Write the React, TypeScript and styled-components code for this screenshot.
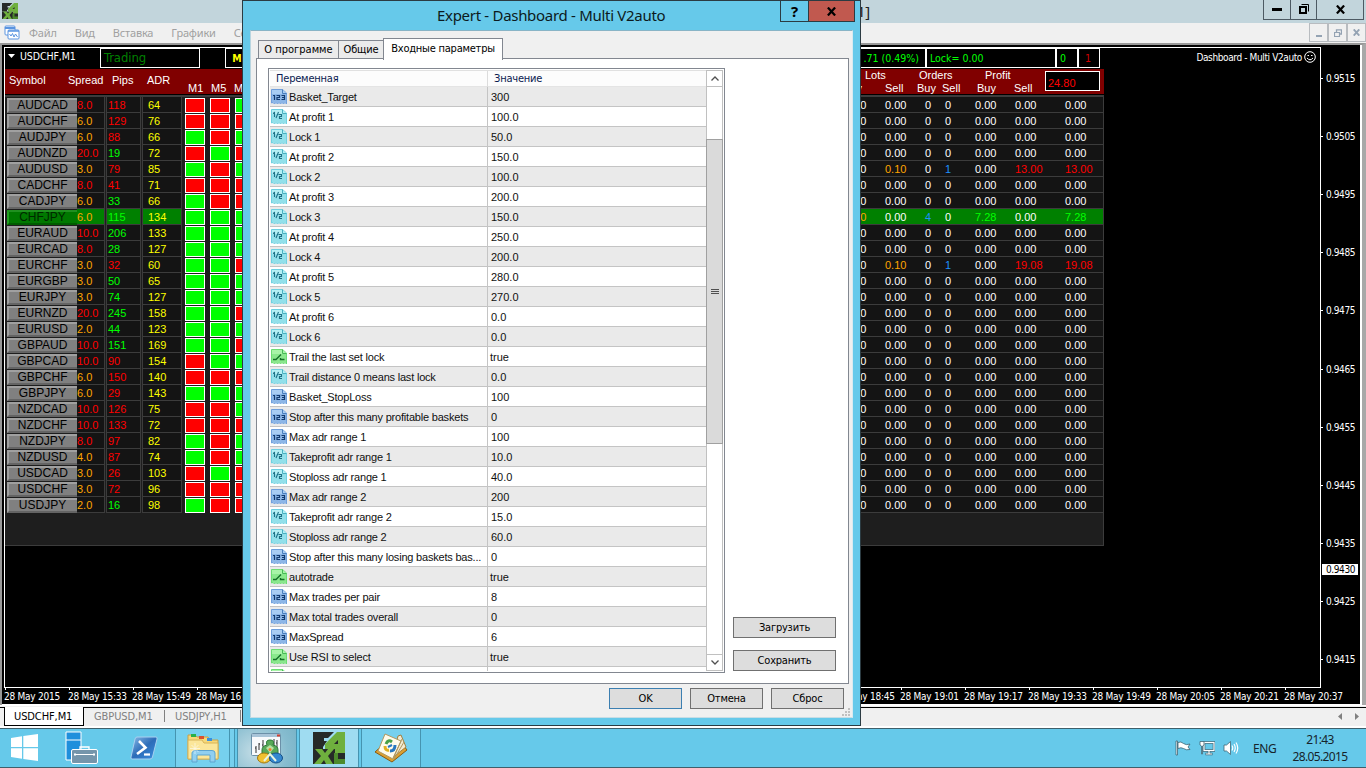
import React from "react";
import styled, { createGlobalStyle, css } from "styled-components";

const ARIAL = `"Liberation Sans", Arial, sans-serif`;
const TAHOMA = `"DejaVu Sans Condensed", Tahoma, sans-serif`;
const SEGOE = `"Noto Sans", "Segoe UI", sans-serif`;

const Global = createGlobalStyle`
  * { box-sizing: border-box; }
  body { margin: 0; overflow: hidden; background: #000; }
  svg { display: block; flex: none; }
`;

/* ---------- data ---------- */

const RED = "#ff0000";
const LIME = "#00ff00";
const ORANGE = "#ffa500";

type Pair = [string, string, string, boolean, string, string];
// name, spread, pips, rising, adr, M1/M5/M15 signals
const pairs: Pair[] = [
  ["AUDCAD", "8.0", "118", false, "64", "rrg"],
  ["AUDCHF", "6.0", "129", false, "76", "rrr"],
  ["AUDJPY", "6.0", "88", false, "66", "grg"],
  ["AUDNZD", "20.0", "19", true, "72", "rgr"],
  ["AUDUSD", "3.0", "79", false, "85", "grg"],
  ["CADCHF", "8.0", "41", false, "71", "rrr"],
  ["CADJPY", "6.0", "33", true, "66", "grr"],
  ["CHFJPY", "6.0", "115", true, "134", "ggg"],
  ["EURAUD", "10.0", "206", true, "133", "ggg"],
  ["EURCAD", "8.0", "28", true, "127", "ggg"],
  ["EURCHF", "3.0", "32", false, "60", "ggr"],
  ["EURGBP", "3.0", "50", true, "65", "ggg"],
  ["EURJPY", "3.0", "74", true, "127", "ggg"],
  ["EURNZD", "20.0", "245", true, "158", "ggr"],
  ["EURUSD", "2.0", "44", true, "123", "ggg"],
  ["GBPAUD", "10.0", "151", true, "169", "ggr"],
  ["GBPCAD", "10.0", "90", false, "154", "rgg"],
  ["GBPCHF", "6.0", "150", false, "140", "rrr"],
  ["GBPJPY", "6.0", "29", false, "143", "ggg"],
  ["NZDCAD", "10.0", "126", false, "75", "rrg"],
  ["NZDCHF", "10.0", "133", false, "72", "rrr"],
  ["NZDJPY", "8.0", "97", false, "82", "grg"],
  ["NZDUSD", "4.0", "87", false, "74", "grg"],
  ["USDCAD", "3.0", "26", false, "103", "rgr"],
  ["USDCHF", "3.0", "72", false, "96", "rrr"],
  ["USDJPY", "2.0", "16", true, "98", "grr"],
];

type Cell = [string, string];
const W = "#ffffff";
const idle: Cell[] = [["0.00", W], ["0.00", W], ["0", W], ["0", W], ["0.00", W], ["0.00", W], ["0.00", W]];
const results: Record<string, Cell[]> = {
  AUDUSD: [["0.00", W], ["0.10", ORANGE], ["0", W], ["1", "#1e90ff"], ["0.00", W], ["13.00", RED], ["13.00", RED]],
  EURCHF: [["0.00", W], ["0.10", ORANGE], ["0", W], ["1", "#1e90ff"], ["0.00", W], ["19.08", RED], ["19.08", RED]],
  CHFJPY: [["0.40", ORANGE], ["0.00", W], ["4", "#1e90ff"], ["0", W], ["7.28", LIME], ["0.00", W], ["7.28", LIME]],
};

type Kind = "int" | "dbl" | "bool";
const params: [Kind, string, string][] = [
  ["int", "Basket_Target", "300"],
  ["dbl", "At profit 1", "100.0"],
  ["dbl", "Lock 1", "50.0"],
  ["dbl", "At profit 2", "150.0"],
  ["dbl", "Lock 2", "100.0"],
  ["dbl", "At profit 3", "200.0"],
  ["dbl", "Lock 3", "150.0"],
  ["dbl", "At profit 4", "250.0"],
  ["dbl", "Lock 4", "200.0"],
  ["dbl", "At profit 5", "280.0"],
  ["dbl", "Lock 5", "270.0"],
  ["dbl", "At profit 6", "0.0"],
  ["dbl", "Lock 6", "0.0"],
  ["bool", "Trail the last set lock", "true"],
  ["dbl", "Trail distance 0 means last lock", "0.0"],
  ["int", "Basket_StopLoss", "100"],
  ["int", "Stop after this many profitable baskets", "0"],
  ["int", "Max adr range 1", "100"],
  ["dbl", "Takeprofit adr range 1", "10.0"],
  ["dbl", "Stoploss adr range 1", "40.0"],
  ["int", "Max adr range 2", "200"],
  ["dbl", "Takeprofit adr range 2", "15.0"],
  ["dbl", "Stoploss adr range 2", "60.0"],
  ["int", "Stop after this many losing baskets bas...", "0"],
  ["bool", "autotrade", "true"],
  ["int", "Max trades per pair", "8"],
  ["int", "Max total trades overall", "0"],
  ["int", "MaxSpread", "6"],
  ["bool", "Use RSI to select", "true"],
  ["bool", "", ""],
];

// empty entries are ticks covered by the dialog
const times = [
  "28 May 2015", "28 May 15:33", "28 May 15:49", "28 May 16:05", "", "", "", "", "", "", "", "", "",
  "28 May 18:45", "28 May 19:01", "28 May 19:17", "28 May 19:33", "28 May 19:49", "28 May 20:05",
  "28 May 20:21", "28 May 20:37",
];
const prices = ["0.9515", "0.9505", "0.9495", "0.9485", "0.9475", "0.9465", "0.9455", "0.9445", "0.9435", "0.9425", "0.9415"];

/* ---------- application frame ---------- */

const Screen = styled.div`
  position: relative;
  width: 1366px;
  height: 768px;
  overflow: hidden;
  display: flex;
  flex-direction: column;
  font: 11px ${ARIAL};
  white-space: nowrap;
`;
const TitleBar = styled.div`
  height: 23px;
  background: #c2d5dc;
  display: flex;
  justify-content: space-between;
  align-items: flex-start;
  padding: 0 2px 0 2px;
`;
const AppIcon = styled.div`
  padding-top: 3px;
  width: 60px;
`;
const AppTitle = styled.div`
  width: 808px;
  text-align: right;
  font: 15px/23px ${SEGOE};
  letter-spacing: -0.3px;
  color: #222;
`;
const WindowButtons = styled.div`
  display: flex;
  margin-left: auto;
  height: 20px;
  border: 1px solid #4d5a63;
  border-top: 0;
`;
const WindowButton = styled.div<{ $w: number }>`
  width: ${(p) => p.$w}px;
  display: flex;
  align-items: center;
  justify-content: center;
  padding-bottom: 1px;
  & + & { border-left: 1px solid #4d5a63; }
`;
const MenuBar = styled.div`
  height: 20px;
  background: #f0f0f0;
  display: flex;
  align-items: center;
  padding-left: 4px;
`;
const MenuItems = styled.div`
  display: flex;
  gap: 18px;
  padding: 0 0 2px 9px;
  font: 11px ${SEGOE};
  letter-spacing: -0.18px;
  color: #a0a0a0;
`;
const MdiButtons = styled.div`
  display: flex;
  margin-left: auto;
  height: 20px;
`;
const MdiButton = styled.div`
  width: 19px;
  height: 19px;
  border: 1px solid #b8bcc0;
  display: flex;
  align-items: center;
  justify-content: center;
`;

/* ---------- chart ---------- */

const ChartFrame = styled.div`
  height: 662px;
  background: #000;
  border-style: solid;
  border-width: 2px 4px 0 2px;
  border-color: #989898 #a8a8a8 #fff #989898;
  display: flex;
`;
const ChartInner = styled.div`
  flex: 1;
  border-right: 2px solid #fff;
  border-bottom: 1px solid #fff;
  padding: 2px 0 0 2px;
  display: flex;
  flex-direction: column;
`;
const ChartMain = styled.div`
  height: 641px;
  display: flex;
`;
const Plot = styled.div`
  width: 1317px;
  border: 1px solid #fff;
  display: flex;
  flex-direction: column;
  align-items: flex-start;
`;
const PriceAxis = styled.div`
  position: relative;
  flex: 1;
  display: flex;
  flex-direction: column;
  padding-top: 2px;
  margin-bottom: -1px;
  font: 10px ${TAHOMA};
  letter-spacing: -0.4px;
`;
const PriceLabel = styled.div`
  flex: 1;
  display: flex;
  align-items: center;
  gap: 3px;
  color: #fff;
  &::before { content: ""; width: 2px; height: 1px; background: #fff; }
`;
const CurrentPrice = styled.div`
  position: absolute;
  left: 1px;
  top: 517px;
  width: 36px;
  height: 11px;
  background: #fff;
  color: #000;
  padding-left: 4px;
  line-height: 11px;
`;
const TimeAxis = styled.div`
  display: flex;
  color: #fff;
  font: 10px/14px ${TAHOMA};
  letter-spacing: -0.25px;
`;
const TimeLabel = styled.div`
  width: 64px;
  flex: none;
  &::before { content: ""; display: block; width: 1px; height: 2px; margin-left: 1px; background: #fff; }
`;

const StatusRow = styled.div`
  width: 1315px;
  height: 21px;
  display: flex;
  color: #fff;
  font: 10.5px ${TAHOMA};
`;
const ChartName = styled.div`
  display: flex;
  align-items: center;
  gap: 5px;
  width: 95px;
  padding-left: 3px;
  padding-bottom: 5px;
  letter-spacing: -0.1px;
`;
const InfoBox = styled.div<{ $w: number; $color: string; $end?: boolean }>`
  width: ${(p) => p.$w}px;
  height: 20px;
  border: 1px solid #fff;
  color: ${(p) => p.$color};
  line-height: 18px;
  padding: 0 ${(p) => (p.$end ? 6 : 3)}px;
  text-align: ${(p) => (p.$end ? "right" : "left")};
  letter-spacing: 0;
`;
const TradingBox = styled(InfoBox)`
  font-size: 13px;
  letter-spacing: -0.1px;
  margin-right: 25px;
`;
const ExpertName = styled.div`
  display: flex;
  align-items: center;
  gap: 2px;
  margin-left: auto;
  padding: 0 4px 3px 0;
  font-size: 10px;
  letter-spacing: -0.38px;
`;

const Dashboard = styled.div`
  width: 1099px;
  background: #1e1e1e;
`;
const HeadRow = styled.div`
  height: 25px;
  background: #800000;
  color: #fff;
  display: flex;
  justify-content: space-between;
`;
const HeadLeft = styled.div`
  display: grid;
  grid-template-columns: 59px 44px 35px 41px 23px 23px 23px;
  padding-left: 4px;
`;
const HeadCell = styled.span<{ $low?: boolean }>`
  line-height: 13px;
  padding-top: ${(p) => (p.$low ? 13 : 5)}px;
`;
const HeadRight = styled.div`
  display: flex;
`;
const HeadGroup = styled.div<{ $w: number }>`
  width: ${(p) => p.$w}px;
  line-height: 13px;
`;
const GroupTitle = styled.div<{ $pad: number }>`
  padding-left: ${(p) => p.$pad}px;
  height: 13px;
`;
const GroupCols = styled.div<{ $first: number }>`
  display: grid;
  height: 12px;
  grid-template-columns: ${(p) => p.$first}px auto;
`;
const TotalBox = styled.div`
  width: 55px;
  height: 20px;
  margin: 2px 4px 0 0;
  border: 1px solid #fff;
  background: #000;
  color: ${RED};
  padding-left: 2px;
  line-height: 23px;
`;
const Divider = styled.div`
  height: 3px;
  background: #3c3c3c;
  border-top: 1px solid #000;
`;
const PairRow = styled.div`
  height: 16px;
  display: flex;
  align-items: flex-end;
  padding-left: 2px;
`;
const PairButton = styled.div<{ $hot: boolean }>`
  width: 70px;
  height: 15px;
  text-align: center;
  padding-right: 1px;
  font: 12px/11px ${ARIAL};
  background: ${(p) => (p.$hot ? "#007800" : "#808080")};
  color: ${(p) => (p.$hot ? "#002800" : "#000")};
  border-style: solid;
  border-width: 2px 0 2px 2px;
  border-color: ${(p) => (p.$hot ? "#209020 #006400 #005c00 #20a020" : "#a0a0a0 #646464 #646464 #a0a0a0")};
`;
const cellBase = css<{ $hot: boolean }>`
  height: 16px;
  background: ${(p) => (p.$hot ? "#008000" : "#141414")};
  border-bottom: 1px solid #3c3c3c;
  line-height: 17px;
`;
const Value = styled.div<{ $hot: boolean; $w: number; $color: string; $pad: number; $open?: boolean }>`
  ${cellBase}
  width: ${(p) => p.$w}px;
  margin-right: 1px;
  padding-left: ${(p) => p.$pad}px;
  color: ${(p) => p.$color};
  border-right: 1px solid #3c3c3c;
  border-left: ${(p) => (p.$open ? 0 : 1)}px solid #3c3c3c;
`;
const Signals = styled.div`
  display: flex;
  gap: 5px;
  padding: 0 5px 0 2px;
`;
const Signal = styled.div<{ $up: boolean }>`
  width: 20px;
  height: 15px;
  border: 1px solid #fff;
  background: ${(p) => (p.$up ? "#00ff00" : "#ff0000")};
`;
const Results = styled.div<{ $hot: boolean }>`
  ${cellBase}
  flex: 1;
  display: grid;
  justify-content: end;
  grid-template-columns: 40px 40px 20px 30px 40px 50px 38px;
  border-right: 1px solid #3c3c3c;
`;
const Tint = styled.span<{ $color: string }>`
  color: ${(p) => p.$color};
`;
const DashFooter = styled.div`
  height: 33px;
  border: 1px solid #3c3c3c;
  border-top: 0;
  border-left: 0;
`;

/* ---------- chart tabs ---------- */

const TabStrip = styled.div`
  height: 23px;
  background: #f0f0f0;
  border-top: 1px solid #fff;
  box-shadow: inset 0 1px 0 #f0f0f0, inset 0 2px 0 #000;
  border-bottom: 2px solid #fff;
  display: flex;
  align-items: center;
  padding: 1px 7px 0 4px;
  font: 11px ${TAHOMA};
  letter-spacing: -0.1px;
  color: #808080;
`;
const ChartTab = styled.div<{ $w: number; $active?: boolean }>`
  width: ${(p) => p.$w}px;
  height: 19px;
  line-height: 19px;
  padding-left: 10px;
  ${(p) => p.$active && css`
    padding-left: 9px;
    background: #fff;
    color: #000;
    border: 1px solid #000;
    border-top: 0;
  `}
  ${(p) => !p.$active && css`
    background: linear-gradient(#808080, #808080) right 0 top 3px / 1px 12px no-repeat;
  `}
`;
const ScrollArrows = styled.div`
  display: flex;
  gap: 13px;
  margin-left: auto;
`;

/* ---------- taskbar ---------- */

const Taskbar = styled.div`
  height: 40px;
  background: #66c9ea;
  border-top: 1px solid #3f5f6b;
  border-bottom: 1px solid #3f5f6b;
  display: flex;
  align-items: center;
`;
const Pinned = styled.div<{ $w: number }>`
  width: ${(p) => p.$w}px;
  display: flex;
  justify-content: center;
`;
const Running = styled.div<{ $w: number; $tone: "light" | "plain" | "grey"; $gap?: number }>`
  width: ${(p) => p.$w}px;
  height: 38px;
  margin-right: ${(p) => p.$gap ?? 2}px;
  display: flex;
  align-items: center;
  justify-content: center;
  border: 1px solid #4594b0;
  border-width: 0 1px;
  background: ${(p) =>
    p.$tone === "light" ? "#9fdcf1" : p.$tone === "plain" ? "#76d0ee" : "radial-gradient(circle at 30% 60%, #c4dde6, #86bccf 70%, #7ab4c8)"};
`;
const StackEdge = styled.div`
  width: 5px;
  height: 38px;
  margin-right: 2px;
  border-right: 1px solid #4594b0;
  background: #76d0ee;
`;
const Tray = styled.div`
  margin-left: auto;
  display: flex;
  align-items: center;
  color: #16242b;
  font: 12px ${SEGOE};
`;
const TrayIcons = styled.div`
  display: flex;
  gap: 8px;
  padding-right: 14px;
`;
const Lang = styled.div`
  width: 37px;
  letter-spacing: -0.35px;
`;
const Clock = styled.div`
  width: 60px;
  text-align: center;
  line-height: 17px;
  letter-spacing: -0.65px;
  margin-right: 16px;
`;

/* ---------- dialog ---------- */

const Dialog = styled.div`
  position: absolute;
  left: 242px;
  top: 0;
  width: 619px;
  height: 726px;
  background: #66c9ea;
  border: 1px solid #2b3b42;
  display: flex;
  flex-direction: column;
  padding: 0 7px 7px;
`;
const DialogTitle = styled.div`
  height: 29px;
  display: flex;
  padding-left: 187px;
  align-items: flex-start;
`;
const DialogCaption = styled.div`
  flex: 1;
  font: 15px/28px ${SEGOE};
  letter-spacing: -0.3px;
  color: #0c1a20;
`;
const CaptionButton = styled.div<{ $w: number; $close?: boolean }>`
  width: ${(p) => p.$w}px;
  height: 21px;
  border: 1px solid #2b3b42;
  border-top: 0;
  margin-left: -1px;
  background: ${(p) => (p.$close ? "#c1594f" : "transparent")};
  display: flex;
  align-items: center;
  justify-content: center;
  font: bold 15px/20px ${SEGOE};
  color: #000;
  &:last-child { margin-right: -2px; }
`;
const Client = styled.div`
  flex: 1;
  background: #f0f0f0;
  border: 1px solid #8ab8ca;
  border-color: #88b4c6 #d8eaf0 #c8dde5 #b8d5e0;
  padding: 6px 3px 0 5px;
  display: flex;
  flex-direction: column;
  position: relative;
`;
const DialogTabs = styled.div`
  display: flex;
  height: 21px;
  align-items: flex-end;
  padding-left: 2px;
  font: 11px ${TAHOMA};
  color: #000;
  z-index: 1;
`;
const DialogTab = styled.div<{ $w: number; $active?: boolean; $ls: number }>`
  width: ${(p) => p.$w}px;
  height: ${(p) => (p.$active ? 22 : 18)}px;
  line-height: ${(p) => (p.$active ? 19 : 18)}px;
  background: ${(p) => (p.$active ? "#fff" : "#ebebeb")};
  border: 1px solid #828790;
  border-bottom: 0;
  text-align: center;
  letter-spacing: ${(p) => p.$ls}px;
  margin-left: -1px;
  margin-bottom: ${(p) => (p.$active ? -2 : 0)}px;
  &:first-child { margin-left: 0; }
`;
const TabPage = styled.div`
  height: 626px;
  background: #fff;
  border: 1px solid #828790;
  display: flex;
  padding: 9px 11px;
  gap: 8px;
`;
const ListBox = styled.div`
  width: 457px;
  height: 605px;
  border: 1px solid #828790;
  padding: 1px;
  display: flex;
`;
const Table = styled.div`
  width: 436px;
  overflow: hidden;
  display: flex;
  flex-direction: column;
`;
const TableHead = styled.div`
  flex: none;
  display: grid;
  grid-template-columns: 217px 1fr;
  height: 17px;
  background: #fcfcfc;
  border-top: 1px solid #e0e0e0;
  border-bottom: 1px solid #e4e4e4;
  font: 11px/16px ${TAHOMA};
  color: #0a1a50;
  letter-spacing: -0.2px;
`;
const TableHeadCell = styled.div`
  padding-left: 6px;
  & + & { border-left: 1px solid #dcdcdc; }
`;
const ParamRow = styled.div<{ $alt: boolean }>`
  flex: none;
  display: grid;
  grid-template-columns: 19px 199px 1fr;
  height: 20px;
  background: ${(p) => (p.$alt ? "#fff" : "#eaeaea")};
  border-bottom: 1px solid #c4c4c4;
  line-height: 20px;
  color: #101010;
`;
const ParamIcon = styled.div`
  padding: 2px 0 0 1px;
`;
const ParamName = styled.div`
  border-right: 1px solid #c4c4c4;
  letter-spacing: -0.2px;
`;
const ParamValue = styled.div<{ $text: boolean }>`
  padding-left: ${(p) => (p.$text ? 2 : 3)}px;
`;
const ScrollBar = styled.div`
  width: 17px;
  border: 1px solid #c0c0c0;
  display: flex;
  flex-direction: column;
  background: #fff;
`;
const ScrollButton = styled.div`
  height: 16px;
  display: flex;
  align-items: center;
  justify-content: center;
  border-bottom: 1px solid #c0c0c0;
  &:last-child { border-bottom: 0; border-top: 1px solid #c0c0c0; margin-top: auto; }
`;
const Thumb = styled.div`
  margin: 52px -1px 0;
  height: 305px;
  border: 1px solid #a0a0a0;
  background: #dadada;
  display: flex;
  align-items: center;
  justify-content: center;
`;
const SideButtons = styled.div`
  display: flex;
  flex-direction: column;
  justify-content: flex-end;
  gap: 12px;
  padding-bottom: 3px;
`;
const Button = styled.div<{ $w: number; $primary?: boolean }>`
  width: ${(p) => p.$w}px;
  height: 21px;
  background: #dddddd;
  border: 1px solid ${(p) => (p.$primary ? "#3c7fb1" : "#707070")};
  text-align: center;
  font: 11px/20px ${TAHOMA};
  letter-spacing: -0.2px;
  color: #000;
`;
const DialogActions = styled.div`
  display: flex;
  justify-content: flex-end;
  gap: 8px;
  padding: 4px 5px 0 0;
`;
const ResizeGrip = styled.div`
  position: absolute;
  right: 2px;
  bottom: 1px;
`;

/* ---------- icons ---------- */

const BrandIcon = ({ size }: { size: number }) => (
  <svg width={size} height={size} viewBox="0 0 32 32">
    <path d="M0 0H21L15 6H11V9H14L10 15V17H0Z" fill="#262a28" />
    <path d="M0 17H32V32H0Z" fill="#262a28" />
    <path d="M24 0H32V15H32V21H22V17H12V12Z" fill="#6fb03e" />
    <path d="M25 8V12H21Z" fill="#262a28" />
    <path d="M2 17H9L12 21L15 17H21L15 24L20 32H13L11 28L8 32H1L8 24Z" fill="#6fb03e" />
    <path d="M21 21H25V27H32V32H21Z" fill="#4c8a2c" />
  </svg>
);

const kinds: Record<Kind, [string, string, string, string]> = {
  int: ["#a9cdf3", "#6f9fdc", "#4a7fbe", "#123a70"],
  dbl: ["#b4f0f5", "#6fd0e0", "#4aafc0", "#1d7186"],
  bool: ["#a8f4a8", "#6bdc72", "#48b858", "#147028"],
};
const TypeIcon = ({ kind }: { kind: Kind }) => {
  const [light, mid, edge, ink] = kinds[kind];
  return (
    <svg width="16" height="16" viewBox="0 0 16 16">
      <path d="M.5 .5H11.5L15.500 4V15L14 13.5L12.5 15L11 13.5L9.5 15L8 13.5L6.5 15L5 13.5L3.5 15L2 13.5L.5 14Z" fill={light} stroke={mid} />
      <path d="M1 5H15V13.500L14 13L12.500 14.500L11 13L9.5 14.5L8 13L6.5 14.5L5 13L3.5 14.500L2 13L1 13.500Z" fill={mid} opacity=".5" />
      <path d="M11.500 .5V4.500H15.500" fill={light} stroke={edge} />
      {kind === "int" && <path d="M2 6.5H3.5V11M5.500 6.5H8.5V8.500H6V10.5H9M10.500 6.5H13.5V10.5H10.5M11 8.5H13" fill="none" stroke={ink} strokeWidth="1.200" />}
      {kind === "dbl" && <path d="M2 4.5L3.5 3.5V8M7.5 3L5 9M7.500 5.500H10.500V7.500H8.500V9.500H11" fill="none" stroke={ink} strokeWidth="1.100" />}
      {kind === "bool" && <path d="M2 10.5H5L10 5.5M9.5 9V10.5H13.5" fill="none" stroke={ink} strokeWidth="1.400" />}
    </svg>
  );
};

const ChartsIcon = () => (
  <svg width="16" height="16" viewBox="0 0 16 16">
    <rect x="1" y="1" width="10" height="9" rx="1" fill="#fff" stroke="#5a94e0" />
    <path d="M1 3H11" stroke="#5a94e0" strokeWidth="2" />
    <rect x="4" y="5" width="11" height="9" rx="1" fill="#fff" stroke="#5a94e0" />
    <path d="M4 6H15" stroke="#5a94e0" strokeWidth="1.500" />
    <path d="M5.500 9L7 11L8.500 8.500L10 12L11.500 9L13.500 12" fill="none" stroke="#5a94e0" />
  </svg>
);

const WindowsIcon = () => (
  <svg width="28" height="28" viewBox="0 0 28 28">
    <path d="M0 4L11 2.300V13H0ZM12.300 2.100L27 0V13H12.300ZM0 14.200H11V24.800L0 23ZM12.300 14.200H27V27L12.300 25Z" fill="#fff" />
  </svg>
);
const ServerIcon = () => (
  <svg width="33" height="34" viewBox="0 0 33 34">
    <path d="M1 1H16V29H1Z" fill="#1f8fdc" stroke="#fff" />
    <path d="M1 9H16" stroke="#fff" />
    <path d="M15 19V16H24V19" fill="none" stroke="#fff" strokeWidth="1.300" />
    <rect x="6.500" y="18.500" width="26" height="14" rx="1.500" fill="#7595ab" stroke="#fff" />
    <path d="M9 23.500H30" stroke="#fff" />
    <path d="M10 22V25M29 22V25" stroke="#fff" />
  </svg>
);
const ShellIcon = () => (
  <svg width="28" height="24" viewBox="0 0 28 24">
    <defs>
      <linearGradient id="ps" x1="0" y1="0" x2="1" y2="1">
        <stop offset="0" stopColor="#8cbce8" />
        <stop offset=".5" stopColor="#2c6cb8" />
        <stop offset="1" stopColor="#3c90e0" />
      </linearGradient>
    </defs>
    <path d="M7 1H26Q27.500 1 27 3L22.500 21Q22 23 20 23H2Q.5 23 1 21L5 3Q5.500 1 7 1Z" fill="url(#ps)" stroke="#a8d0f0" />
    <path d="M9 5L15.500 11.500L7 18" fill="none" stroke="#fff" strokeWidth="2.600" />
    <path d="M14 18.500H20" stroke="#fff" strokeWidth="2.200" />
  </svg>
);
const ExplorerIcon = () => (
  <svg width="34" height="32" viewBox="0 0 34 32">
    <path d="M2 3H9L11 5H22L24 8H32V27H2Z" fill="#f6d878" stroke="#c8a048" />
    <rect x="5" y="2" width="5" height="3" fill="#28b048" />
    <rect x="13" y="4" width="5" height="3" fill="#d85030" />
    <rect x="21" y="6" width="5" height="3" fill="#3890e0" />
    <path d="M2 8H16L18 11H32V27H2Z" fill="#fbe69a" stroke="#d8b458" />
    <path d="M6 30V21Q6 18.500 9 18.500H26Q29 18.500 29 21V30H24V23H11V30Z" fill="#90cff0" stroke="#5ca4d0" />
    <path d="M9 11V22M4 16.500H14M5.500 13L12.500 20M12.500 13L5.500 20" stroke="#fff" strokeWidth=".7" opacity=".8" />
  </svg>
);
const TerminalIcon = () => (
  <svg width="34" height="34" viewBox="0 0 34 34">
    <rect x="1.500" y="2.500" width="29" height="22" rx="1" fill="#f8fafc" stroke="#6b90a8" />
    <path d="M2 4.500H30" stroke="#a8c4d8" strokeWidth="3" />
    <path d="M27 4.500H30" stroke="#d04030" strokeWidth="2" />
    <path d="M6 15V22M5 17H6M9 12V19M9 13H10M13 9V16M12 14H13M24 8V16M27 9V18M26 12H27" stroke="#303030" />
    <path d="M12 19Q12 15 17 14Q15 9 20 9Q25 9 23 14Q28 15 28 19V23H12Z" fill="#58a858" stroke="#2a7a35" />
    <path d="M16 17L20 14L24 17L20 22Z" fill="#b8e0a0" />
    <ellipse cx="14" cy="27" rx="6.500" ry="5" fill="#f0c030" stroke="#a07810" />
    <ellipse cx="26" cy="27" rx="6.500" ry="5" fill="#3488d0" stroke="#155088" />
    <path d="M14 30L20 23L26 30" fill="none" stroke="#e8f4e0" strokeWidth="2" />
    <circle cx="20" cy="18.500" r="1.500" fill="#f08030" />
  </svg>
);
const BookIcon = () => (
  <svg width="34" height="32" viewBox="0 0 34 32">
    <path d="M1 20L18 30L33 18L30 14L10 12Z" fill="#dca030" stroke="#8a5a10" />
    <path d="M18 26L32 15L27 3L24 4Z" fill="#f4ead0" stroke="#a08040" />
    <path d="M4 19L11 2L27 9L19 27Z" fill="#fffbea" stroke="#b09860" />
    <path d="M19 26L28 7M20 27L30 10" stroke="#b09860" />
    <path d="M12 12Q14 7 18 10" fill="none" stroke="#48a048" strokeWidth="3" />
    <path d="M11 14Q11 19 15 18" fill="none" stroke="#e0b020" strokeWidth="3" />
    <path d="M16 19Q21 19 21 13" fill="none" stroke="#2878c0" strokeWidth="3" />
    <path d="M14 15L18 13" stroke="#2878c0" strokeWidth="2" />
  </svg>
);
const FlagIcon = () => (
  <svg width="16" height="16" viewBox="0 0 16 16">
    <path d="M1 1H2.500V15H1Z" fill="#fff" stroke="#3f6675" strokeWidth=".8" />
    <path d="M3 2.500Q6 1 8.500 3.500Q11 5.500 15 4L13 7L15 9.500Q11 10.500 8.500 8.500Q6 7 3 8.500Z" fill="#fff" stroke="#3f6675" strokeWidth=".8" />
  </svg>
);
const NetworkIcon = () => (
  <svg width="16" height="16" viewBox="0 0 16 16">
    <rect x="5" y="2.500" width="10" height="8" fill="#66c9ea" stroke="#3f6675" strokeWidth="2.600" />
    <rect x="5" y="2.500" width="10" height="8" fill="none" stroke="#fff" strokeWidth="1.200" />
    <path d="M10 11V14M6.500 14H13.500" stroke="#3f6675" strokeWidth="2.600" />
    <path d="M10 11V14M7 14H13" stroke="#fff" strokeWidth="1.200" />
    <path d="M1 1.500H5V5L3.500 6V14H2.500V6L1 5Z" fill="#fff" stroke="#3f6675" strokeWidth=".8" />
  </svg>
);
const SoundIcon = () => (
  <svg width="16" height="16" viewBox="0 0 16 16">
    <path d="M1 5H3.500L7.500 1.500V14.500L3.500 11H1Z" fill="#fff" stroke="#3f6675" strokeWidth=".8" />
    <path d="M9 5.500Q10.500 8 9 10.500M11 4Q13.500 8 11 12M13 2.500Q16.500 8 13 13.500" fill="none" stroke="#fff" strokeWidth="1.200" />
  </svg>
);
const CloseCross = ({ size, color, w }: { size: number; color: string; w: number }) => (
  <svg width={size} height={size} viewBox="0 0 8 8">
    <path d="M.8 .5L7.200 7.500M7.200 .5L.8 7.500" stroke={color} strokeWidth={w} />
  </svg>
);

/* ---------- page ---------- */

export default function App() {
  return (
    <Screen>
      <Global />
      <TitleBar>
        <AppIcon><BrandIcon size={16} /></AppIcon>
        <AppTitle>1]</AppTitle>
        <WindowButtons>
          <WindowButton $w={26}>
            <svg width="10" height="3"><rect width="10" height="3" y="0" fill="#000" /></svg>
          </WindowButton>
          <WindowButton $w={26}>
            <svg width="10" height="10"><path d="M2.500 .5H9.500V7.500" fill="none" stroke="#000" /><rect x="1" y="3" width="6" height="6" fill="none" stroke="#000" strokeWidth="2" /></svg>
          </WindowButton>
          <WindowButton $w={47}><CloseCross size={9} color="#000" w={2} /></WindowButton>
        </WindowButtons>
      </TitleBar>
      <MenuBar>
        <ChartsIcon />
        <MenuItems>
          <span>Файл</span><span>Вид</span><span>Вставка</span><span>Графики</span><span>Се</span>
        </MenuItems>
        <MdiButtons>
          <MdiButton><svg width="6" height="8"><rect y="6" width="6" height="2" fill="#94a3b3" /></svg></MdiButton>
          <MdiButton>
            <svg width="8" height="8"><path d="M2.500 3V.8H7.500V5H6" fill="none" stroke="#94a3b3" strokeWidth="1.300" /><path d="M.5 3.500H5.500V7.500H.5Z" fill="none" stroke="#94a3b3" strokeWidth="1.200" /></svg>
          </MdiButton>
          <MdiButton><CloseCross size={7} color="#94a3b3" w={2.2} /></MdiButton>
        </MdiButtons>
      </MenuBar>

      <ChartFrame>
        <ChartInner>
          <ChartMain>
            <Plot>
              <StatusRow>
                <ChartName>
                  <svg width="7" height="4"><path d="M0 0H7L3.500 4Z" fill="#fff" /></svg>
                  USDCHF,M1
                </ChartName>
                <TradingBox $w={100} $color="#008000">Trading</TradingBox>
                <InfoBox $w={301} $color="#ffff00"><b>&nbsp;M</b></InfoBox>
                <InfoBox $w={400} $color={LIME} $end>.71 (0.49%)</InfoBox>
                <InfoBox $w={130} $color={LIME}>Lock= 0.00</InfoBox>
                <InfoBox $w={22} $color={LIME}>0</InfoBox>
                <InfoBox $w={22} $color="#d00000">&nbsp;1</InfoBox>
                <ExpertName>
                  Dashboard - Multi V2auto
                  <svg width="12" height="12" viewBox="0 0 12 12">
                    <circle cx="6" cy="6" r="5.300" fill="none" stroke="#fff" />
                    <path d="M3.500 4.500H5M7 4.500H8.500M3 7Q6 10.500 9 7" fill="none" stroke="#fff" />
                  </svg>
                </ExpertName>
              </StatusRow>
              <Dashboard>
                <HeadRow>
                  <HeadLeft>
                    <HeadCell>Symbol</HeadCell><HeadCell>Spread</HeadCell><HeadCell>Pips</HeadCell><HeadCell>ADR</HeadCell>
                    <HeadCell $low>M1</HeadCell><HeadCell $low>M5</HeadCell><HeadCell $low>M</HeadCell>
                  </HeadLeft>
                  <HeadRight>
                    <HeadGroup $w={74}>
                      <GroupTitle $pad={22}>Lots</GroupTitle>
                      <GroupCols $first={42}><span>Buy</span><span>Sell</span></GroupCols>
                    </HeadGroup>
                    <HeadGroup $w={60}>
                      <GroupTitle $pad={2}>Orders</GroupTitle>
                      <GroupCols $first={25}><span>Buy</span><span>Sell</span></GroupCols>
                    </HeadGroup>
                    <HeadGroup $w={68}>
                      <GroupTitle $pad={8}>Profit</GroupTitle>
                      <GroupCols $first={37}><span>Buy</span><span>Sell</span></GroupCols>
                    </HeadGroup>
                    <TotalBox>24.80</TotalBox>
                  </HeadRight>
                </HeadRow>
                <Divider />
                {pairs.map(([name, spread, pips, rising, adr, signals]) => {
                  const hot = name === "CHFJPY";
                  return (
                    <PairRow key={name}>
                      <PairButton $hot={hot}>{name}</PairButton>
                      <Value $hot={hot} $w={28} $pad={0} $open $color={parseFloat(spread) >= 8 ? RED : ORANGE}>{spread}</Value>
                      <Value $hot={hot} $w={35} $pad={1} $color={rising ? LIME : RED}>{pips}</Value>
                      <Value $hot={hot} $w={40} $pad={5} $color="#ffff00">{adr}</Value>
                      <Signals>
                        {[...signals].map((s, i) => <Signal key={i} $up={s === "g"} />)}
                      </Signals>
                      <Results $hot={hot}>
                        {(results[name] ?? idle).map(([text, color], i) => <Tint key={i} $color={color}>{text}</Tint>)}
                      </Results>
                    </PairRow>
                  );
                })}
                <DashFooter />
              </Dashboard>
            </Plot>
            <PriceAxis>
              {prices.map((p) => <PriceLabel key={p}>{p}</PriceLabel>)}
              <CurrentPrice>0.9430</CurrentPrice>
            </PriceAxis>
          </ChartMain>
          <TimeAxis>
            {times.map((t, i) => <TimeLabel key={i}>{t}</TimeLabel>)}
          </TimeAxis>
        </ChartInner>
      </ChartFrame>

      <TabStrip>
        <ChartTab $w={80} $active>USDCHF,M1</ChartTab>
        <ChartTab $w={81}>GBPUSD,M1</ChartTab>
        <ChartTab $w={76}>USDJPY,H1</ChartTab>
        <ScrollArrows>
          <svg width="4" height="7"><path d="M4 0V7L0 3.500Z" fill="#808080" /></svg>
          <svg width="4" height="7"><path d="M0 0V7L4 3.500Z" fill="#808080" /></svg>
        </ScrollArrows>
      </TabStrip>

      <Taskbar>
        <Pinned $w={50}><WindowsIcon /></Pinned>
        <Pinned $w={62}><ServerIcon /></Pinned>
        <Pinned $w={63}><ShellIcon /></Pinned>
        <Running $w={55} $tone="plain" $gap={0}><ExplorerIcon /></Running>
        <StackEdge />
        <Running $w={60} $tone="grey"><TerminalIcon /></Running>
        <Running $w={60} $tone="light"><BrandIcon size={32} /></Running>
        <Running $w={60} $tone="plain"><BookIcon /></Running>
        <Tray>
          <TrayIcons><FlagIcon /><NetworkIcon /><SoundIcon /></TrayIcons>
          <Lang>ENG</Lang>
          <Clock>21:43<br />28.05.2015</Clock>
        </Tray>
      </Taskbar>

      <Dialog>
        <DialogTitle>
          <DialogCaption>Expert - Dashboard - Multi V2auto</DialogCaption>
          <CaptionButton $w={29}>?</CaptionButton>
          <CaptionButton $w={47} $close><CloseCross size={9} color="#000" w={2} /></CaptionButton>
        </DialogTitle>
        <Client>
          <DialogTabs>
            <DialogTab $w={81} $ls={0}>О программе</DialogTab>
            <DialogTab $w={46} $ls={-0.15}>Общие</DialogTab>
            <DialogTab $w={120} $ls={-0.22} $active>Входные параметры</DialogTab>
          </DialogTabs>
          <TabPage>
            <ListBox>
              <Table>
                <TableHead>
                  <TableHeadCell>Переменная</TableHeadCell>
                  <TableHeadCell>Значение</TableHeadCell>
                </TableHead>
                {params.map(([kind, name, value], i) => (
                  <ParamRow key={i} $alt={i % 2 === 1}>
                    <ParamIcon><TypeIcon kind={kind} /></ParamIcon>
                    <ParamName>{name}</ParamName>
                    <ParamValue $text={kind === "bool"}>{value}</ParamValue>
                  </ParamRow>
                ))}
              </Table>
              <ScrollBar>
                <ScrollButton>
                  <svg width="8" height="5"><path d="M.5 4.500L4 1L7.500 4.500" fill="none" stroke="#505050" strokeWidth="1.300" /></svg>
                </ScrollButton>
                <Thumb>
                  <svg width="8" height="8"><path d="M0 1.500H8M0 3.500H8M0 5.500H8" stroke="#505050" /></svg>
                </Thumb>
                <ScrollButton>
                  <svg width="8" height="5"><path d="M.5 .5L4 4L7.500 .5" fill="none" stroke="#505050" strokeWidth="1.300" /></svg>
                </ScrollButton>
              </ScrollBar>
            </ListBox>
            <SideButtons>
              <Button $w={103}>Загрузить</Button>
              <Button $w={103}>Сохранить</Button>
            </SideButtons>
          </TabPage>
          <DialogActions>
            <Button $w={73} $primary>OK</Button>
            <Button $w={73}>Отмена</Button>
            <Button $w={73}>Сброс</Button>
          </DialogActions>
          <ResizeGrip>
            <svg width="8" height="8"><path d="M6 0H8V2H6ZM3 3H5V5H3ZM6 3H8V5H6ZM0 6H2V8H0ZM3 6H5V8H3ZM6 6H8V8H6Z" fill="#c0c0c0" /></svg>
          </ResizeGrip>
        </Client>
      </Dialog>
    </Screen>
  );
}
